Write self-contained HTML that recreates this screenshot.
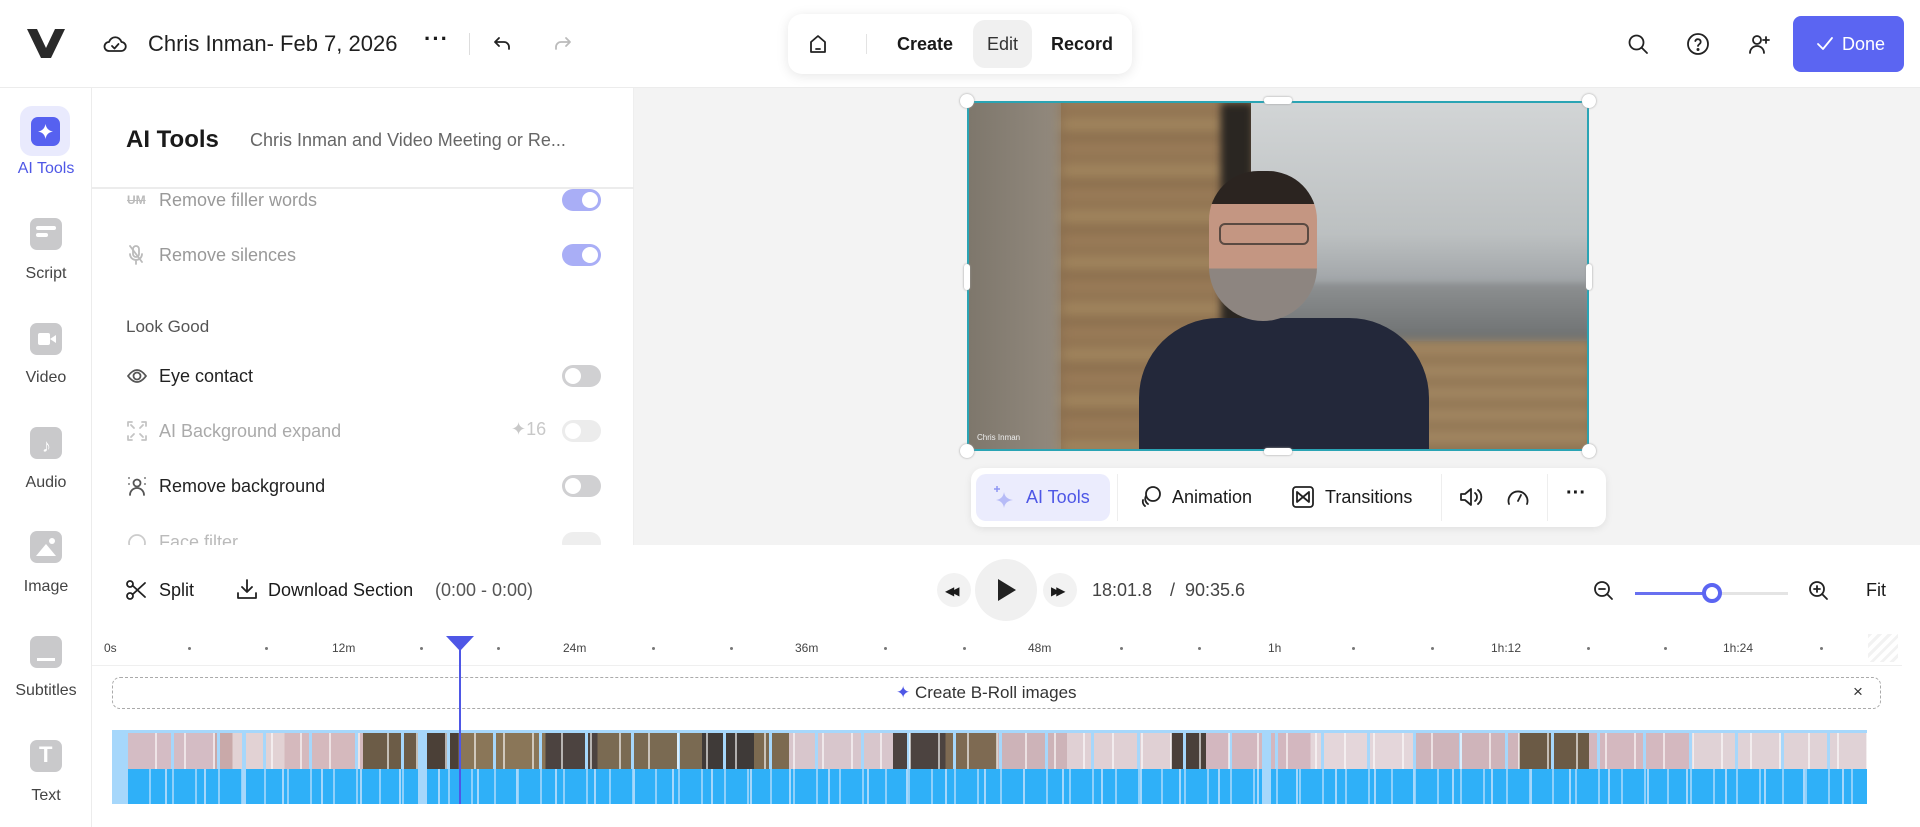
<!DOCTYPE html>
<html><head><meta charset="utf-8"><style>
*{box-sizing:border-box;margin:0;padding:0}
body{width:1920px;height:827px;overflow:hidden;background:#fff;font-family:"Liberation Sans",Arial,sans-serif;color:#1a1a1a;position:relative}
.a{position:absolute}
.ic{position:absolute;fill:none;stroke:#222;stroke-width:1.8;stroke-linecap:round;stroke-linejoin:round}
.side{left:0;top:88px;width:92px;height:739px;border-right:1px solid #ececec}
.si{position:absolute;left:30px;width:32px;height:32px;border-radius:7px;background:#c9c9cb}
.sl{position:absolute;left:0;width:92px;text-align:center;font-size:16px;color:#444}
.row{position:absolute;left:126px;font-size:18px;color:#222}
.tg{position:absolute;left:562px;width:39px;height:22px;border-radius:11px;background:#d0d0d2}
.tg:after{content:"";position:absolute;left:3px;top:3px;width:16px;height:16px;border-radius:50%;background:#fff}
.tg.on{background:#a9aef6}.tg.on:after{left:20px}
.tk{position:absolute;top:641px;font-size:12px;color:#444}
.dot{position:absolute;top:647px;width:3px;height:3px;border-radius:50%;background:#777}
</style></head><body>

<!-- top bar -->
<div class="a" style="left:0;top:0;width:1920px;height:88px;border-bottom:1px solid #ececec"></div>
<svg class="a" style="left:27px;top:29px" width="38" height="29" viewBox="0 0 38 29"><path d="M0 0h10l9 19 9-19h10L24 29H14z" fill="#2a2a2a"/></svg>
<svg class="ic" style="left:103px;top:34px" width="24" height="20" viewBox="0 0 24 20"><path d="M6 17h12a4.5 4.5 0 0 0 .5-9A6.5 6.5 0 0 0 6 8a4.5 4.5 0 0 0 0 9z"/><path d="M9 12l2.5 2.5L15.5 10"/></svg>
<div class="a" style="left:148px;top:31px;font-size:22px;color:#1f1f1f">Chris Inman- Feb 7, 2026</div>
<div class="a" style="left:424px;top:26px;font-size:22px;font-weight:bold;letter-spacing:1px">···</div>
<div class="a" style="left:469px;top:33px;width:1px;height:22px;background:#ddd"></div>
<svg class="ic" style="left:492px;top:34px" width="20" height="20" viewBox="0 0 20 20"><path d="M7 4L3 8l4 4M3 8h9a5 5 0 0 1 5 5v2"/></svg>
<svg class="ic" style="left:553px;top:34px;stroke:#bbb" width="20" height="20" viewBox="0 0 20 20"><path d="M13 4l4 4-4 4M17 8H8a5 5 0 0 0-5 5v2"/></svg>

<div class="a" style="left:788px;top:14px;width:344px;height:60px;background:#fff;border-radius:14px;box-shadow:0 2px 12px rgba(0,0,0,.1)"></div>
<svg class="ic" style="left:807px;top:32px" width="22" height="24" viewBox="0 0 22 24"><path d="M4 10l7-6 7 6v10H4z"/><path d="M9 17h4"/></svg>
<div class="a" style="left:866px;top:34px;width:1px;height:20px;background:#e3e3e3"></div>
<div class="a" style="left:897px;top:34px;font-size:18px;font-weight:bold">Create</div>
<div class="a" style="left:973px;top:20px;width:59px;height:48px;border-radius:12px;background:#f0f0f0"></div>
<div class="a" style="left:987px;top:34px;font-size:18px;color:#333">Edit</div>
<div class="a" style="left:1051px;top:34px;font-size:18px;font-weight:bold">Record</div>

<svg class="ic" style="left:1627px;top:33px" width="22" height="22" viewBox="0 0 22 22"><circle cx="9.5" cy="9.5" r="7"/><path d="M15 15l5 5"/></svg>
<svg class="ic" style="left:1686px;top:32px" width="24" height="24" viewBox="0 0 24 24"><circle cx="12" cy="12" r="10"/><path d="M9.3 9a2.8 2.8 0 0 1 5.4 1c0 2-2.7 2.5-2.7 4"/><circle cx="12" cy="17.5" r=".6" fill="#222"/></svg>
<svg class="ic" style="left:1747px;top:32px" width="24" height="24" viewBox="0 0 24 24"><circle cx="10" cy="8" r="4"/><path d="M3 21a7 7 0 0 1 14 0M19 5v6M16 8h6"/></svg>
<div class="a" style="left:1793px;top:16px;width:111px;height:56px;border-radius:8px;background:#5b65f2"></div>
<svg class="ic" style="left:1815px;top:34px;stroke:#fff" width="20" height="20" viewBox="0 0 20 20"><path d="M3 10l5 5 9-11"/></svg>
<div class="a" style="left:1842px;top:34px;font-size:18px;color:#fff">Done</div>

<!-- sidebar -->
<div class="a side">
<div class="a" style="left:20px;top:18px;width:50px;height:50px;border-radius:12px;background:#e9eafd"></div>
<div class="a" style="left:31px;top:29px;width:29px;height:29px;border-radius:7px;background:#5661f0"></div>
<svg class="a" style="left:35px;top:33px" width="21" height="21" viewBox="0 0 21 21"><path d="M10.5 3Q11.5 9.5 18 10.5Q11.5 11.5 10.5 18Q9.5 11.5 3 10.5Q9.5 9.5 10.5 3z" fill="#fff"/></svg>
<div class="sl" style="top:72px;color:#4e57e6">AI Tools</div>
<div class="si" style="top:130px"></div><div class="a" style="left:36px;top:138px;width:20px;height:4px;border-radius:2px;background:#fff"></div><div class="a" style="left:36px;top:145px;width:12px;height:4px;border-radius:2px;background:#fff"></div>
<div class="sl" style="top:177px">Script</div>
<div class="si" style="top:235px"></div><div class="a" style="left:38px;top:245px;width:12px;height:12px;border-radius:2px;background:#fff"></div><div class="a" style="left:50px;top:247px;border-right:6px solid #fff;border-top:4px solid transparent;border-bottom:4px solid transparent"></div>
<div class="sl" style="top:281px">Video</div>
<div class="si" style="top:339px"></div><div class="a" style="left:42px;top:348px;font-size:18px;color:#fff;font-weight:bold">♪</div>
<div class="sl" style="top:386px">Audio</div>
<div class="si" style="top:443px"></div><div class="a" style="left:36px;top:456px;border-bottom:12px solid #fff;border-left:10px solid transparent;border-right:10px solid transparent"></div><div class="a" style="left:49px;top:450px;width:6px;height:6px;border-radius:50%;background:#fff"></div>
<div class="sl" style="top:490px">Image</div>
<div class="si" style="top:548px"></div><div class="a" style="left:37px;top:570px;width:18px;height:3px;background:#fff"></div>
<div class="sl" style="top:594px">Subtitles</div>
<div class="si" style="top:652px"></div><div class="a" style="left:39px;top:654px;font-size:22px;font-weight:bold;color:#fff">T</div>
<div class="sl" style="top:699px">Text</div>
</div>

<!-- panel -->
<div class="a" style="left:92px;top:88px;width:542px;height:457px;background:#fff;border-right:1px solid #eee"></div>
<div class="a" style="left:126px;top:126px;font-size:24px;font-weight:bold;color:#1a1a1a">AI Tools</div>
<div class="a" style="left:250px;top:130px;font-size:18px;color:#666">Chris Inman and Video Meeting or Re...</div>
<div class="a" style="left:92px;top:187px;width:542px;height:2px;background:#ececec"></div>
<div class="a" style="left:127px;top:193px;font-size:12px;color:#bbb;font-weight:bold;text-decoration:line-through">UM</div>
<div class="row" style="left:159px;top:190px;color:#999">Remove filler words</div><div class="tg on" style="top:189px"></div>
<svg class="ic" style="left:128px;top:244px;stroke:#bbb" width="16" height="22" viewBox="0 0 16 22"><rect x="5" y="2" width="6" height="11" rx="3"/><path d="M2 10a6 6 0 0 0 12 0M8 16v4M2 2l12 16"/></svg>
<div class="row" style="left:159px;top:245px;color:#999">Remove silences</div><div class="tg on" style="top:244px"></div>
<div class="row" style="top:317px;font-size:17px;color:#555">Look Good</div>
<svg class="ic" style="left:127px;top:367px;stroke:#555" width="20" height="18" viewBox="0 0 20 18"><path d="M1 9q9-12 18 0q-9 12-18 0z"/><circle cx="10" cy="9" r="3.5"/></svg>
<div class="row" style="left:159px;top:366px">Eye contact</div><div class="tg" style="top:365px"></div>
<svg class="ic" style="left:127px;top:421px;stroke:#c4c4c4" width="20" height="20" viewBox="0 0 20 20"><path d="M1 5V1h4M15 1h4v4M19 15v4h-4M5 19H1v-4M4 4l3 3M16 4l-3 3M4 16l3-3M16 16l-3-3"/></svg>
<div class="row" style="left:159px;top:421px;color:#aaa">AI Background expand</div>
<div class="a" style="left:511px;top:419px;font-size:18px;color:#c8c8c8">✦16</div>
<div class="tg" style="top:420px;background:#ececec"></div>
<svg class="ic" style="left:127px;top:475px;stroke:#555" width="20" height="22" viewBox="0 0 20 22"><circle cx="10" cy="8" r="3.5"/><path d="M3 20a7 7 0 0 1 14 0M2 3v0M18 3v0M2 9v0M18 9v0"/></svg>
<div class="row" style="left:159px;top:476px">Remove background</div><div class="tg" style="top:475px"></div>
<div class="a" style="left:92px;top:530px;width:542px;height:15px;overflow:hidden"><svg class="ic" style="left:35px;top:3px;stroke:#ccc" width="20" height="20" viewBox="0 0 20 20"><circle cx="10" cy="10" r="8"/></svg><div class="a" style="left:67px;top:2px;font-size:18px;color:#bbb">Face filter</div><div class="a" style="left:470px;top:2px;width:39px;height:22px;border-radius:11px;background:#eee"></div></div>

<!-- preview area -->
<div class="a" style="left:634px;top:88px;width:1286px;height:457px;background:#f3f3f3"></div>
<div class="a" style="left:967px;top:101px;width:622px;height:350px;overflow:hidden;border:2px solid #2aa4b4;background:#8a6f50">
 <div class="a" style="left:0;top:0;width:92px;height:350px;background:linear-gradient(90deg,#7e776c,#938a7e)"></div>
 <div class="a" style="left:92px;top:-10px;width:165px;height:370px;background:repeating-linear-gradient(180deg,#9a7c58 0 18px,#85684a 18px 24px,#a3875f 24px 40px,#7a5e42 40px 46px);filter:blur(6px)"></div>
 <div class="a" style="left:252px;top:0;width:32px;height:240px;background:#2a2622;filter:blur(4px)"></div>
 <div class="a" style="left:282px;top:0;width:340px;height:238px;background:linear-gradient(180deg,#d2d5d6 0%,#bcc0c1 55%,#80848a 100%)"></div>
 <div class="a" style="left:300px;top:180px;width:322px;height:60px;background:linear-gradient(180deg,#8d9091,#6c6f70);filter:blur(3px)"></div>
 <div class="a" style="left:420px;top:238px;width:202px;height:112px;background:repeating-linear-gradient(180deg,#a08560 0 16px,#8a6e4e 16px 22px);filter:blur(5px)"></div>
 <div class="a" style="left:170px;top:215px;width:290px;height:150px;border-radius:80px 80px 0 0;background:#23283a"></div>
 <div class="a" style="left:240px;top:68px;width:108px;height:150px;border-radius:50px 50px 55px 55px;background:linear-gradient(180deg,#2b2420 0 22%,#c49682 22% 65%,#8d8580 65%)"></div>
 <div class="a" style="left:250px;top:120px;width:90px;height:22px;border:2px solid #5a4a42;border-radius:6px"></div>
 <div class="a" style="left:8px;top:330px;font-size:8px;color:#eee">Chris Inman</div>
</div>
<div class="a" style="left:960px;top:94px;width:14px;height:14px;border-radius:50%;background:#fff;box-shadow:0 0 2px #999"></div>
<div class="a" style="left:1582px;top:94px;width:14px;height:14px;border-radius:50%;background:#fff;box-shadow:0 0 2px #999"></div>
<div class="a" style="left:960px;top:444px;width:14px;height:14px;border-radius:50%;background:#fff;box-shadow:0 0 2px #999"></div>
<div class="a" style="left:1582px;top:444px;width:14px;height:14px;border-radius:50%;background:#fff;box-shadow:0 0 2px #999"></div>
<div class="a" style="left:1264px;top:97px;width:28px;height:7px;border-radius:3px;background:#fff;box-shadow:0 0 2px #999"></div>
<div class="a" style="left:1264px;top:448px;width:28px;height:7px;border-radius:3px;background:#fff;box-shadow:0 0 2px #999"></div>
<div class="a" style="left:964px;top:264px;width:6px;height:26px;border-radius:3px;background:#fff;box-shadow:0 0 2px #999"></div>
<div class="a" style="left:1586px;top:264px;width:6px;height:26px;border-radius:3px;background:#fff;box-shadow:0 0 2px #999"></div>

<!-- toolbar -->
<div class="a" style="left:971px;top:468px;width:635px;height:59px;border-radius:12px;background:#fff;box-shadow:0 2px 8px rgba(0,0,0,.08)"></div>
<div class="a" style="left:976px;top:474px;width:134px;height:47px;border-radius:10px;background:#ebecfd"></div>
<svg class="a" style="left:992px;top:484px" width="26" height="28" viewBox="0 0 26 28"><path d="M12 8Q13 15 21 16Q13 17 12 24Q11 17 4 16Q11 15 12 8z" fill="#b6bbf7"/><path d="M5 2v6M2 5h6" stroke="#8f96f3" stroke-width="1.5"/></svg>
<div class="a" style="left:1026px;top:487px;font-size:18px;color:#4e57e6">AI Tools</div>
<div class="a" style="left:1117px;top:474px;width:1px;height:47px;background:#eee"></div>
<svg class="ic" style="left:1138px;top:484px" width="26" height="26" viewBox="0 0 26 26"><circle cx="15" cy="10" r="7"/><path d="M8 12a6 6 0 0 0 2 8M5 16a6 6 0 0 0 2 6"/></svg>
<div class="a" style="left:1172px;top:487px;font-size:18px">Animation</div>
<svg class="ic" style="left:1291px;top:485px" width="24" height="24" viewBox="0 0 24 24"><rect x="2" y="2" width="20" height="20" rx="3"/><path d="M6 7v10l12-10v10z"/></svg>
<div class="a" style="left:1325px;top:487px;font-size:18px">Transitions</div>
<div class="a" style="left:1441px;top:474px;width:1px;height:47px;background:#eee"></div>
<svg class="ic" style="left:1458px;top:485px" width="26" height="24" viewBox="0 0 26 24"><path d="M3 9h4l6-5v16l-6-5H3z"/><path d="M17 8a5 5 0 0 1 0 8M20 5a9 9 0 0 1 0 14"/></svg>
<svg class="ic" style="left:1506px;top:486px" width="24" height="22" viewBox="0 0 24 22"><path d="M3 18a9.5 9.5 0 1 1 18 0"/><path d="M12 15l3-6"/></svg>
<div class="a" style="left:1547px;top:474px;width:1px;height:47px;background:#eee"></div>
<div class="a" style="left:1566px;top:482px;font-size:20px;font-weight:bold">···</div>

<!-- controls -->
<svg class="ic" style="left:125px;top:579px" width="22" height="22" viewBox="0 0 22 22"><circle cx="5" cy="17" r="3"/><circle cx="5" cy="5" r="3"/><path d="M7.5 6.5L20 18M7.5 15.5L20 4"/></svg>
<div class="a" style="left:159px;top:580px;font-size:18px">Split</div>
<svg class="ic" style="left:236px;top:578px" width="22" height="22" viewBox="0 0 22 22"><path d="M11 2v12M6 9l5 5 5-5M2 15v5h18v-5"/></svg>
<div class="a" style="left:268px;top:580px;font-size:18px">Download Section</div>
<div class="a" style="left:435px;top:580px;font-size:18px;color:#555">(0:00 - 0:00)</div>

<div class="a" style="left:937px;top:573px;width:34px;height:34px;border-radius:50%;background:#f2f2f2"></div>
<div class="a" style="left:945px;top:584px;font-size:12px;letter-spacing:-4px">◀◀</div>
<div class="a" style="left:975px;top:559px;width:62px;height:62px;border-radius:50%;background:#f0f0f0"></div>
<div class="a" style="left:998px;top:579px;border-left:18px solid #222;border-top:11px solid transparent;border-bottom:11px solid transparent"></div>
<div class="a" style="left:1043px;top:573px;width:34px;height:34px;border-radius:50%;background:#f2f2f2"></div>
<div class="a" style="left:1051px;top:584px;font-size:12px;letter-spacing:-4px">▶▶</div>
<div class="a" style="left:1092px;top:580px;font-size:18px;color:#444">18:01.8</div>
<div class="a" style="left:1170px;top:580px;font-size:18px;color:#444">/&nbsp; 90:35.6</div>

<svg class="ic" style="left:1592px;top:579px" width="24" height="24" viewBox="0 0 24 24"><circle cx="10" cy="10" r="7"/><path d="M15 15l5 5M7 10h6"/></svg>
<div class="a" style="left:1635px;top:592px;width:78px;height:3px;background:#6870f0"></div>
<div class="a" style="left:1713px;top:592px;width:75px;height:3px;background:#e4e4e4"></div>
<div class="a" style="left:1702px;top:583px;width:20px;height:20px;border-radius:50%;border:4px solid #5b65f2;background:#fff"></div>
<svg class="ic" style="left:1807px;top:579px" width="24" height="24" viewBox="0 0 24 24"><circle cx="10" cy="10" r="7"/><path d="M15 15l5 5M7 10h6M10 7v6"/></svg>
<div class="a" style="left:1866px;top:580px;font-size:18px">Fit</div>

<!-- ruler -->
<div class="tk" style="left:104px">0s</div><div class="dot" style="left:188px"></div><div class="dot" style="left:265px"></div>
<div class="tk" style="left:332px">12m</div><div class="dot" style="left:420px"></div><div class="dot" style="left:497px"></div>
<div class="tk" style="left:563px">24m</div><div class="dot" style="left:652px"></div><div class="dot" style="left:730px"></div>
<div class="tk" style="left:795px">36m</div><div class="dot" style="left:884px"></div><div class="dot" style="left:963px"></div>
<div class="tk" style="left:1028px">48m</div><div class="dot" style="left:1120px"></div><div class="dot" style="left:1198px"></div>
<div class="tk" style="left:1268px">1h</div><div class="dot" style="left:1352px"></div><div class="dot" style="left:1431px"></div>
<div class="tk" style="left:1491px">1h:12</div><div class="dot" style="left:1587px"></div><div class="dot" style="left:1664px"></div>
<div class="tk" style="left:1723px">1h:24</div><div class="dot" style="left:1820px"></div>
<div class="a" style="left:1868px;top:634px;width:30px;height:28px;background:repeating-linear-gradient(135deg,#f2f2f2 0 3px,#fff 3px 7px)"></div>
<div class="a" style="left:92px;top:665px;width:1810px;height:1px;background:#efefef"></div>

<div class="a" style="left:112px;top:677px;width:1769px;height:32px;border:1px dashed #aaa;border-radius:8px"></div>
<div class="a" style="left:896px;top:683px;font-size:17px;color:#333"><span style="color:#4e57e6">✦</span> Create B-Roll images</div>
<div class="a" style="left:1853px;top:682px;font-size:17px;color:#333">×</div>

<!-- track -->
<div class="a" style="left:112px;top:730px;width:1755px;height:74px;background:#a6d7fb"></div>
<div class="a" style="left:128px;top:733px;width:1739px;height:36px;background:
linear-gradient(90deg,#d4bcc4 0 5%,#c9a9a9 5% 6%,#e2d2d4 6% 9%,#d5b9bd 9% 13.5%,#6c5c47 13.5% 17%,#4b4037 17% 19%,#8a7658 19% 24%,#4c4340 24% 27%,#7a6a52 27% 33%,#3f3a38 33% 36%,#7c6a50 36% 38%,#d8c6cc 38% 44%,#4c4340 44% 47%,#7e6a52 47% 50%,#cdb3b8 50% 54%,#e0d0d4 54% 60%,#4a403a 60% 62%,#d3b7bf 62% 68%,#e4d6da 68% 74%,#cfb4ba 74% 80%,#6b5a45 80% 84%,#d4b8bf 84% 90%,#e0d2d6 90% 100%);"></div>
<div class="a" style="left:128px;top:733px;width:1739px;height:36px;background:repeating-linear-gradient(90deg,transparent 0 27px,rgba(255,255,255,.6) 27px 29px),repeating-linear-gradient(90deg,transparent 0 43px,#a6d7fb 43px 46px)"></div>
<div class="a" style="left:128px;top:769px;width:1739px;height:35px;background:repeating-linear-gradient(90deg,#2fb0f8 0 21px,#8fd0fb 21px 23px),repeating-linear-gradient(90deg,transparent 0 57px,#a6d7fb 57px 61px)"></div>
<div class="a" style="left:128px;top:769px;width:1739px;height:35px;background:repeating-linear-gradient(90deg,transparent 0 37px,#a6d7fb 37px 39px)"></div>
<div class="a" style="left:242px;top:730px;width:4px;height:74px;background:#a6d7fb"></div>
<div class="a" style="left:418px;top:730px;width:9px;height:74px;background:#a6d7fb"></div>
<div class="a" style="left:1262px;top:730px;width:9px;height:74px;background:#a6d7fb"></div>

<!-- playhead -->
<div class="a" style="left:459px;top:640px;width:2px;height:164px;background:#4e57e6"></div>
<div class="a" style="left:446px;top:636px;border-top:15px solid #4e57e6;border-left:14px solid transparent;border-right:14px solid transparent"></div>
</body></html>
